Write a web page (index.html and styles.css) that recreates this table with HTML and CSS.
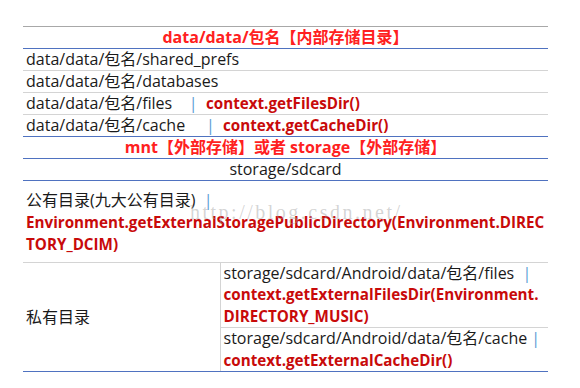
FILE: index.html
```html
<!DOCTYPE html>
<html>
<head>
<meta charset="utf-8">
<link rel="stylesheet" href="styles.css">
</head>
<body>
<div class="page">
  <table class="tbl">
    <colgroup>
      <col class="c1">
      <col class="c2">
    </colgroup>
    <tr class="hdr top">
      <td colspan="2" class="center head">data/data/包名【内部存储目录】</td>
    </tr>
    <tr class="row">
      <td colspan="2">data/data/包名/shared_prefs</td>
    </tr>
    <tr class="row">
      <td colspan="2">data/data/包名/databases</td>
    </tr>
    <tr class="row">
      <td colspan="2">data/data/包名/files &nbsp;&nbsp;&nbsp;<span class="bar">|</span>&nbsp; <span class="code">context.getFilesDir()</span></td>
    </tr>
    <tr class="row end">
      <td colspan="2">data/data/包名/cache &nbsp;&nbsp;&nbsp;&nbsp;<span class="bar">|</span>&nbsp; <span class="code">context.getCacheDir()</span></td>
    </tr>
    <tr class="hdr">
      <td colspan="2" class="center head">mnt【外部存储】或者 storage【外部存储】</td>
    </tr>
    <tr class="row end">
      <td colspan="2" class="center">storage/sdcard</td>
    </tr>
    <tr class="row pub">
      <td colspan="2">公有目录(九大公有目录) &nbsp;<span class="bar">|</span><br><span class="code">Environment.getExternalStoragePublicDirectory(Environment.DIREC<br>TORY_DCIM)</span></td>
    </tr>
    <tr class="row priv1">
      <td rowspan="2" class="left end-cell">私有目录</td>
      <td class="right">storage/sdcard/Android/data/包名/files &nbsp;<span class="bar">|</span><br><span class="code">context.getExternalFilesDir(Environment.<br>DIRECTORY_MUSIC)</span></td>
    </tr>
    <tr class="row end">
      <td class="right">storage/sdcard/Android/data/包名/cache <span class="bar">|</span><br><span class="code">context.getExternalCacheDir()</span></td>
    </tr>
  </table>
  <div class="wm">http://blog.csdn.net/</div>
</div>
</body>
</html>
```

FILE: styles.css
```css
html, body {
  margin: 0;
  padding: 0;
  background: #fff;
}
.page {
  position: relative;
  width: 580px;
  height: 388px;
  padding: 26px 0 0 23px;
  box-sizing: border-box;
  font-family: "Open Sans", "Noto Sans CJK SC", sans-serif;
  font-size: 16px;
  color: #1a1a1a;
}
.tbl {
  width: 525px;
  border-collapse: collapse;
  table-layout: fixed;
}
.c1 {
  width: 197px;
}
.c2 {
  width: 328px;
}
.tbl td {
  padding: 0 3px;
  line-height: 21px;
  height: 21px;
  border-bottom: 1px solid #d4d4d4;
  vertical-align: middle;
  white-space: nowrap;
  overflow: visible;
}
.top td {
  border-top: 1px solid #a8a8a8;
}
.hdr td {
  border-bottom: 1px solid #4f72c0;
}
.end td, .end-cell {
  border-bottom: 1px solid #4f72c0 !important;
}
.center {
  text-align: center;
}
.head {
  color: #ff2020;
  font-weight: bold;
}
.code {
  color: #c80a0a;
  font-weight: bold;
  font-size: 15.2px;
  line-height: 1;
}
.bar {
  color: #5b9bd5;
}
.pub td {
  height: 81px;
  line-height: 22px;
}
.left {
  border-right: 1px solid #d4d4d4;
}
.tbl .right {
  line-height: 21.4px;
  height: 43px;
}
.tbl .priv1 .right {
  height: 64px;
}
.wm {
  position: absolute;
  left: 190px;
  top: 201px;
  font-family: "Liberation Serif", serif;
  font-size: 20px;
  letter-spacing: 2.5px;
  color: rgba(160, 160, 160, 0.45);
}
```
